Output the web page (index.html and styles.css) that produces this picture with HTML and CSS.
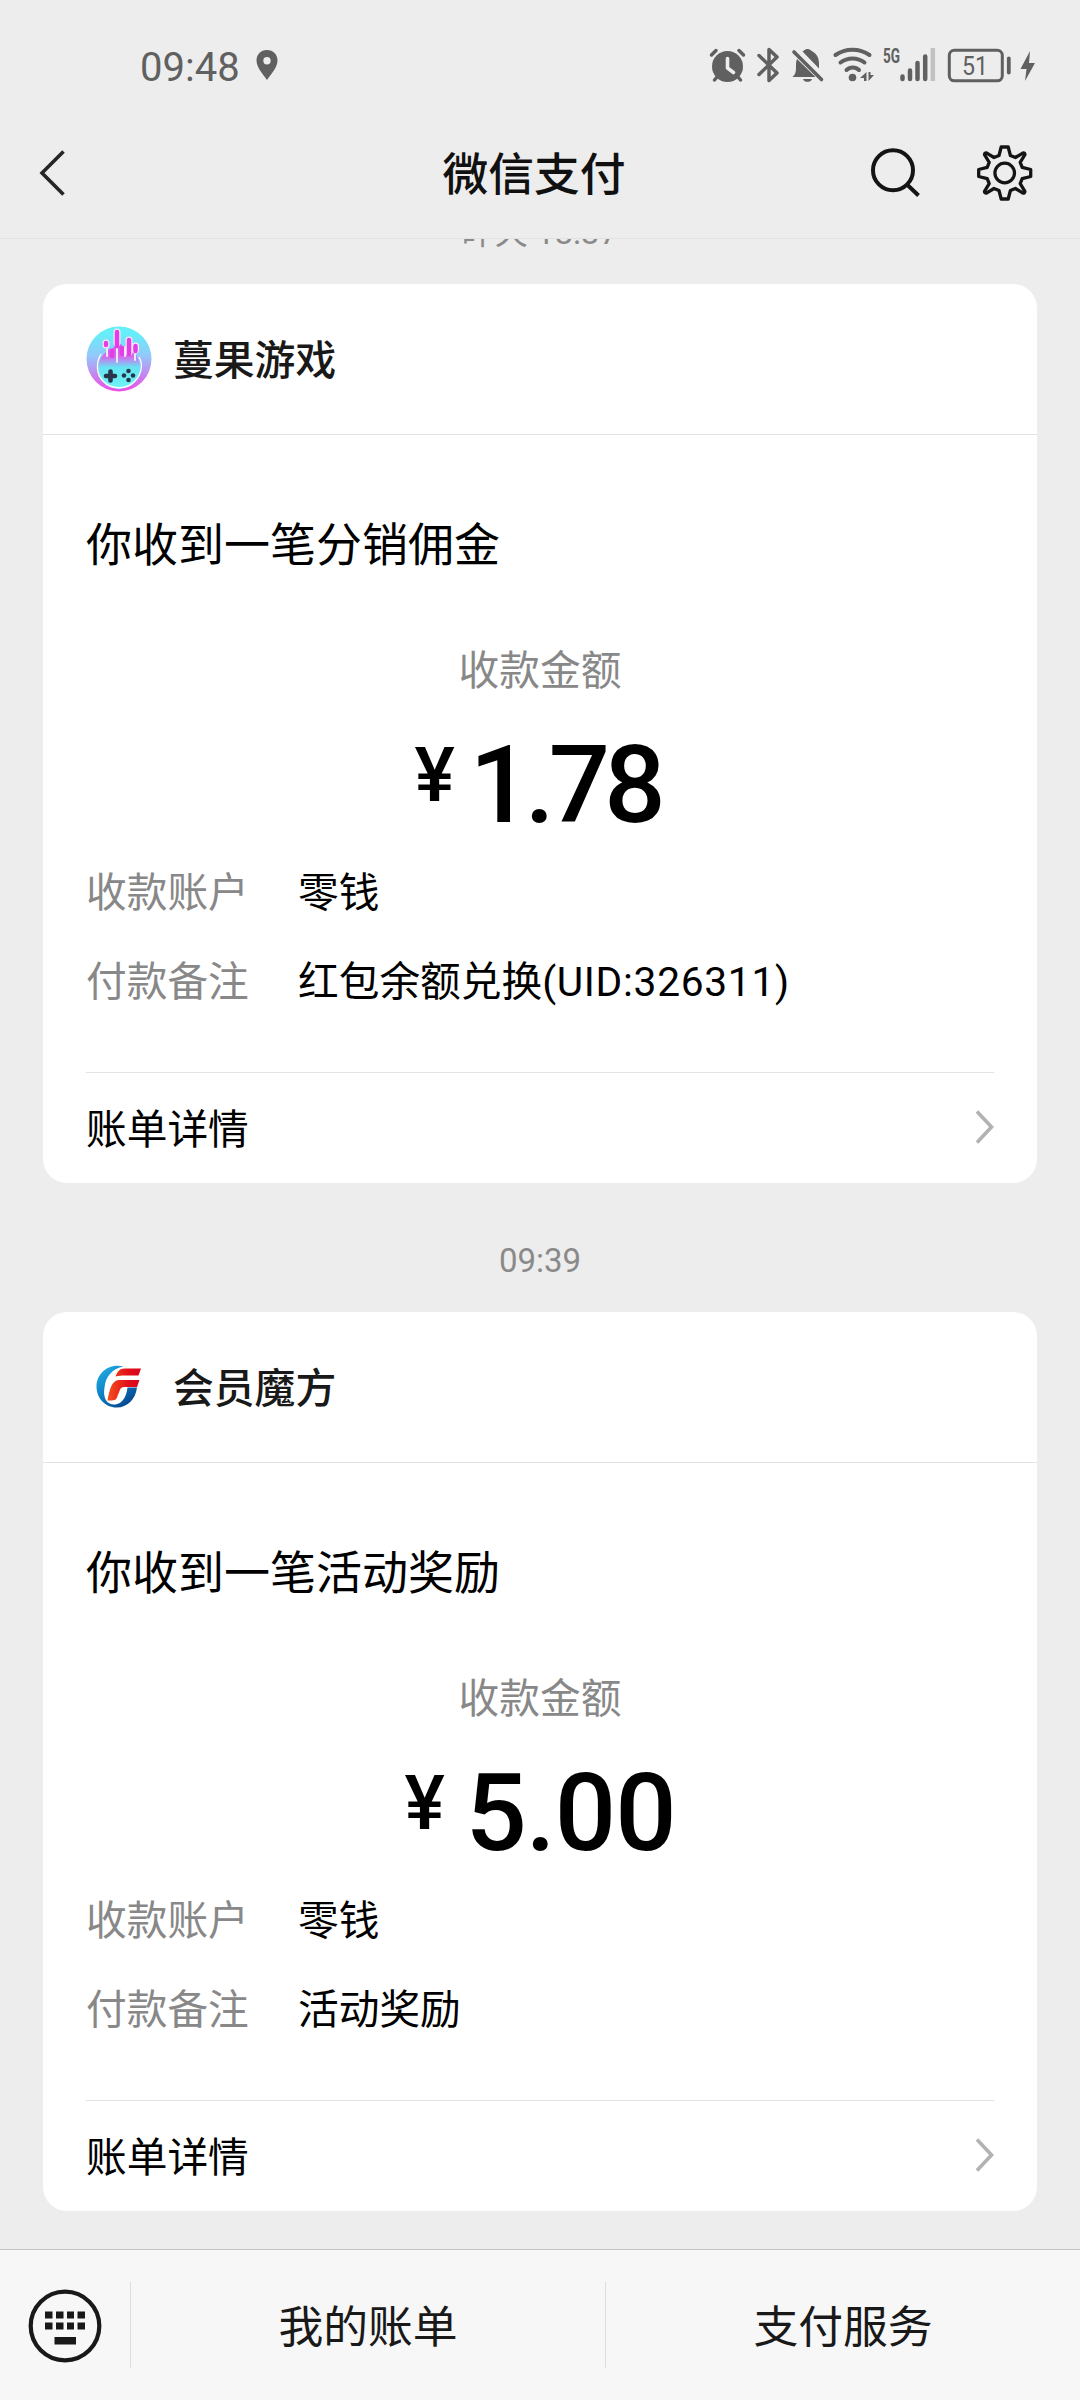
FILE: index.html
```html
<!DOCTYPE html>
<html lang="zh-CN">
<head>
<meta charset="utf-8">
<title>微信支付</title>
<link rel="stylesheet" href="styles.css">
</head>
<body>
<div class="screen">
  <div class="status">
    <span class="clock">09:48</span>
    <svg class="pin" width="22" height="30" viewBox="0 0 22 30"><path fill-rule="evenodd" d="M11 0C4.800 0 .5 4.600.5 10.500c0 7 6 13 10.500 19.500 4.500-6.500 10.500-12.500 10.500-19.500C21.500 4.600 17.200 0 11 0zm0 7a3.700 3.700 0 1 1 0 7.400A3.700 3.700 0 0 1 11 7z"/></svg>
    <svg class="tray" width="340" height="40" viewBox="704 44 340 40">
      <g fill="none" stroke="#606060" stroke-linecap="round">
        <circle cx="727.500" cy="66.500" r="15.500" fill="#606060" stroke="none"/>
        <path stroke-width="3.500" d="M711.500 55l4.500-4.500M743.500 55l-4.500-4.500M717 77l-2.500 3M738 77l2.500 3"/>
        <path stroke="#ededed" stroke-width="3.600" stroke-linejoin="round" d="M727.500 58.500v9.500l6 4.500"/>
        <path stroke-width="3.500" stroke-linejoin="round" d="M759 55.500l18 17.500-8 7.500V49.500l8 7.500-18 17.500"/>
        <path stroke="none" fill="#606060" d="M792.500 77c3.500-3 3.500-6 3.500-11 0-3.500.2-5 1-7l18.500 18zM802.500 51.500c1.500-.7 2.500-2.500 5-2.500s3.500 1.800 5 2.500c4.500 2.300 6.500 7 6.500 12v5zM803 79h9c-1 3.800-8 3.800-9 0z"/>
        <path stroke-width="3.600" d="M794 52l27.500 27.500"/>
        <path stroke-width="4" d="M835.500 55c10-7 24-7 34 0M840.500 62.500c7-5.500 17-5.500 24 0M846.500 70c3.500-3.500 9-3.500 12.500 0"/>
        <circle cx="852.500" cy="77.500" r="3.800" fill="#606060" stroke="none"/>
        <path stroke="none" fill="#606060" d="M866.500 72v9h-2.500v-3h-4zM868.500 81v-9h2v3h3.500z"/>
        <path stroke-width="4.500" d="M902.500 76.500v2.500M910 70.500v8.500M917.500 63v16M925.200 56.500v22.500"/>
        <path stroke="#c2c2c2" stroke-width="4.500" stroke-linecap="butt" d="M932.800 48v33"/>
        <rect x="949.300" y="50.300" width="53" height="30.500" rx="5" stroke-width="3"/>
        <path stroke-width="3.800" d="M1008.800 58.500v14"/>
        <path stroke="none" fill="#606060" d="M1030 51l-9.500 18h6l-1.500 12 10-18h-6z"/>
      </g>
      <text class="net" x="883" y="62.500" textLength="17" lengthAdjust="spacingAndGlyphs">5G</text>
      <text class="level" x="962" y="74.500" textLength="26" lengthAdjust="spacingAndGlyphs">51</text>
    </svg>
  </div>

  <header class="nav">
    <svg class="back" width="30" height="48" viewBox="0 0 30 48"><path d="M26.500 2.500L5 24l21.500 21.500" fill="none" stroke="#262626" stroke-width="3.600"/></svg>
    <h1>微信支付</h1>
    <svg class="actions" width="170" height="60" viewBox="864 143.500 170 60">
      <g fill="none" stroke="#141414">
        <circle cx="893" cy="170.700" r="20" stroke-width="4"/>
        <path stroke-width="4" d="M907.500 185.500l11 10.500"/>
        <circle cx="1004.700" cy="173.500" r="9.800" stroke-width="3.200"/>
        <g transform="translate(1004.700 173.500)"><path stroke-width="3.300" stroke-linejoin="round" d="M-3.500-26h7l2.200 8.500 5 2L18.500-20.200Q20.400-20 20.200-18.300L15.500-10.700l2 5L26-3.500v7l-8.500 2.200-2 5L20.200 18.300Q20 20.400 18.300 20.200L10.700 15.500l-5 2L3.500 26h-7l-2.200-8.500-5-2L-18.300 20.200Q-20.400 20-20.200 18.300L-15.500 10.700l-2-5L-26 3.500v-7l8.500-2.200 2-5L-20.200-18.300Q-20-20.400-18.300-20.200L-10.700-15.500l5-2z"/></g>
      </g>
    </svg>
  </header>

  <main class="feed">
    <div class="stamp first">昨天 18:37</div>
    <section class="card">
      <div class="merchant">
        <svg width="66" height="66" viewBox="0 0 66 66">
          <defs>
            <linearGradient id="bg" x1="0" y1="0" x2="0" y2="1"><stop offset=".1" stop-color="#64eff9"/><stop offset=".45" stop-color="#93c8fa"/><stop offset="1" stop-color="#f04be6"/></linearGradient>
            <linearGradient id="orb" x1="0" y1="0" x2="0" y2="1"><stop offset="0" stop-color="#e052e8"/><stop offset=".3" stop-color="#d070ee"/><stop offset=".52" stop-color="#66e4f3"/><stop offset="1" stop-color="#6cf4f6"/></linearGradient>
          </defs>
          <circle cx="33" cy="33" r="32.500" fill="url(#bg)"/>
          <path fill="url(#orb)" d="M18 28l5-5 4-1 4-4h4l2 4 4-4h5l3 8 3 8c4 8 3 16-3 22-8 9-24 9-32 0-5-6-6-16-2-24z"/>
          <path fill="none" stroke="#f6fdff" stroke-width="1.400" d="M15 28c-5 8-5 20 2 27 8 9 24 9 32 0 7-7 8-17 4-24"/>
          <g stroke="#f7eaff" stroke-linecap="round" stroke-width="7"><path d="M20 17v2M31 6v11M43 14v12M49.500 20v4"/></g>
          <g stroke="#e33de6" stroke-linecap="round" stroke-width="4.500"><path d="M20 17v2M31 6v14M43 14v14M49.500 20v5M36 22v6M26 25v5"/></g>
          <path stroke="#eee8ff" stroke-width="2" stroke-linecap="round" d="M21 23v7M31 23v13M39 21v9M49 28v6"/>
          <path stroke="#28364b" stroke-width="4.600" stroke-linecap="round" d="M20 50h9M24.500 45.500v9"/>
          <g fill="#28364b"><circle cx="42.500" cy="45" r="2.300"/><circle cx="42.500" cy="54" r="2.300"/><circle cx="38" cy="49.500" r="2.300"/><circle cx="47" cy="49.500" r="2.300"/></g>
        </svg>
        <h2>蔓果游戏</h2>
      </div>
      <div class="body">
        <p class="title">你收到一笔分销佣金</p>
        <p class="caption">收款金额</p>
        <p class="amount tight"><span class="yen">¥</span><span class="sum">1.78</span></p>
        <dl>
          <dt>收款账户</dt><dd>零钱</dd>
          <dt>付款备注</dt><dd>红包余额兑换<span class="uid">(UID:326311)</span></dd>
        </dl>
        <div class="detail"><span>账单详情</span><svg width="20" height="36" viewBox="0 0 20 36"><path d="M3 2.500L17.500 18 3 33.500" fill="none" stroke="#b2b2b2" stroke-width="3.600"/></svg></div>
      </div>
    </section>
    <div class="stamp">09:39</div>
    <section class="card">
      <div class="merchant">
        <svg width="66" height="66" viewBox="0 0 66 66">
          <defs>
            <linearGradient id="ring" x1="0" y1="0" x2=".7" y2="1"><stop offset="0" stop-color="#27b3e8"/><stop offset=".5" stop-color="#0e83c8"/><stop offset="1" stop-color="#07468f"/></linearGradient>
            <linearGradient id="eff" x1="0" y1="0" x2="1" y2="0"><stop offset="0" stop-color="#f4511d"/><stop offset=".6" stop-color="#e2101a"/><stop offset="1" stop-color="#d8061a"/></linearGradient>
          </defs>
          <g transform="translate(.5 1.500)">
            <path fill="url(#ring)" d="M37 11C22 7 10 18 10 31c0 12 9 21 20 21 11 0 19-8 20.500-20H41c-1 9-5 16-12 17-8 1-13-6-11-17C19 21 26 13 37 11z"/>
            <path fill="url(#eff)" d="M29 21c2-5 4-8 9-8h16.500L52 20H38c-3 0-5 0-9 1zM21 45c2-10 4-20.500 12-20.500h20L50.500 31.500H38c-3 0-4 1-5 4l-3 7.500c-1 2-5 2-9 2z"/>
          </g>
        </svg>
        <h2>会员魔方</h2>
      </div>
      <div class="body">
        <p class="title">你收到一笔活动奖励</p>
        <p class="caption">收款金额</p>
        <p class="amount"><span class="yen">¥</span><span class="sum">5.00</span></p>
        <dl>
          <dt>收款账户</dt><dd>零钱</dd>
          <dt>付款备注</dt><dd>活动奖励</dd>
        </dl>
        <div class="detail"><span>账单详情</span><svg width="20" height="36" viewBox="0 0 20 36"><path d="M3 2.500L17.500 18 3 33.500" fill="none" stroke="#b2b2b2" stroke-width="3.600"/></svg></div>
      </div>
    </section>
  </main>

  <footer class="menu">
    <div class="keyboard">
      <svg width="74" height="76" viewBox="-37 -38 74 76"><circle r="34.300" fill="none" stroke="#191919" stroke-width="4.200"/><path fill="#191919" d="M-20-14.500h7.500v7H-20zM-9-14.500h7.500v7H-9zM2-14.500h7v7H2zM12.500-14.500H20v7h-7.500zM-20-3.500h7.500v7H-20zM-9-3.500h7.500v7H-9zM2-3.500h7v7H2zM12.500-3.500H20v7h-7.500zM-10.500 11h21.500v7.500h-21.500z"/></svg>
    </div>
    <div class="item">我的账单</div>
    <div class="item">支付服务</div>
  </footer>
</div>
</body>
</html>
```

FILE: styles.css
```css
* { box-sizing: border-box; margin: 0; padding: 0; }
body { background: #ededed; font-family: Roboto, "Noto Sans CJK SC", sans-serif; color: #000; }
svg { display: block; flex: none; }
.screen { width: 1080px; height: 2400px; display: flex; flex-direction: column; overflow: hidden; }

.status { height: 110px; flex: none; display: flex; padding: 44px 36px 0 140px; color: #606060; fill: #606060; }
.clock { font-size: 40px; line-height: 48px; width: 116px; }
.pin { margin-top: 6px; }
.tray { margin-left: auto; }
.net { font: 700 20px Roboto, sans-serif; }
.level { font: 400 25px Roboto, sans-serif; }

.nav { height: 129px; flex: none; display: flex; align-items: flex-start; padding: 33px 46px 0 37px; border-bottom: 1px solid #e2e2e2; }
.nav h1 { flex: 1; text-align: center; font-size: 45.800px; font-weight: 500; line-height: 60px; color: #111; padding: 3px 0 0 137px; }
.back { margin-top: 6px; }

.feed { flex: 1; overflow: hidden; padding: 0 43px; }
.stamp { height: 129px; padding-top: 55px; text-align: center; font-size: 33px; line-height: 46px; color: #8a8a8a; }
.stamp.first { height: 74px; margin-top: -29px; padding: 0; }

.card { height: 899px; background: #fff; border-radius: 24px; }
.merchant { height: 150.500px; border-bottom: 1px solid #e3e3e3; display: flex; align-items: center; gap: 21px; padding-left: 43px; }
.merchant h2 { font-size: 40.800px; font-weight: 500; line-height: 60px; padding-top: 5px; color: #191919; }
.body { padding: 0 43px; }
.title { padding-top: 77px; font-size: 46px; line-height: 66px; }
.caption { padding-top: 63px; font-size: 40.700px; line-height: 60px; text-align: center; color: #888; }
.amount { height: 136px; display: flex; justify-content: center; align-items: flex-start; font-weight: 500; }
.yen { font-size: 76px; line-height: 90px; width: 61px; padding-top: 29px; }
.sum { font-size: 108px; line-height: 126px; padding-top: 21px; letter-spacing: -1px; }
.tight .yen { width: 55px; }
.tight .sum { letter-spacing: -6px; margin-right: 6px; }
dl { display: grid; grid-template-columns: 212px 1fr; grid-auto-rows: 89px; font-size: 40.700px; line-height: 60px; padding-top: 26px; height: 235px; }
dt { color: #888; }
.uid { letter-spacing: .7px; }
.detail { height: 110px; border-top: 1px solid #e3e3e3; display: flex; align-items: center; justify-content: space-between; font-size: 40.700px; line-height: 60px; }
.detail span { padding-top: 6px; }

.menu { height: 151px; flex: none; background: #f7f7f7; border-top: 1px solid #c4c4c4; display: flex; align-items: center; }
.keyboard { width: 130px; display: flex; justify-content: center; padding-top: 2px; }
.item { flex: 1; height: 86px; border-left: 1px solid #dcdcdc; text-align: center; font-size: 44.800px; line-height: 91px; color: #191919; }
```
